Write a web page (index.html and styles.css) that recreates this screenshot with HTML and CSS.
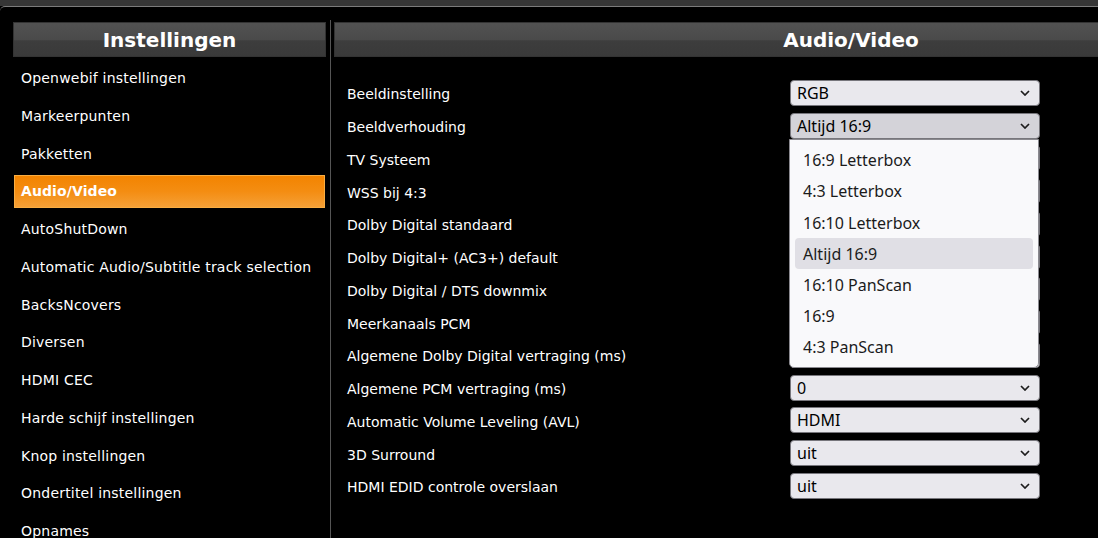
FILE: index.html
```html
<!DOCTYPE html>
<html lang="nl">
<head>
<meta charset="utf-8">
<title>Instellingen - Audio/Video</title>
<link rel="stylesheet" href="styles.css">
</head>
<body>
<div class="topbar"></div>
<div class="frame">
  <aside class="sidebar">
    <div class="head">Instellingen</div>
    <ul class="menu">
      <li class="item">Openwebif instellingen</li>
      <li class="item">Markeerpunten</li>
      <li class="item">Pakketten</li>
      <li class="item active">Audio/Video</li>
      <li class="item">AutoShutDown</li>
      <li class="item">Automatic Audio/Subtitle track selection</li>
      <li class="item">BacksNcovers</li>
      <li class="item">Diversen</li>
      <li class="item">HDMI CEC</li>
      <li class="item">Harde schijf instellingen</li>
      <li class="item">Knop instellingen</li>
      <li class="item">Ondertitel instellingen</li>
      <li class="item">Opnames</li>
    </ul>
  </aside>
  <div class="divider"></div>
  <main class="content">
    <div class="head">Audio/Video</div>
    <div class="form">
      <div class="label">Beeldinstelling</div>
      <div class="cell"><div class="select"><span>RGB</span><svg class="chev" viewBox="0 0 10 6"><path d="M1 1l4 4 4-4"/></svg></div></div>

      <div class="label">Beeldverhouding</div>
      <div class="cell">
        <div class="select open"><span>Altijd 16:9</span><svg class="chev" viewBox="0 0 10 6"><path d="M1 1l4 4 4-4"/></svg>
          <ul class="dropdown">
            <li class="opt">16:9 Letterbox</li>
            <li class="opt">4:3 Letterbox</li>
            <li class="opt">16:10 Letterbox</li>
            <li class="opt sel">Altijd 16:9</li>
            <li class="opt">16:10 PanScan</li>
            <li class="opt">16:9</li>
            <li class="opt">4:3 PanScan</li>
          </ul>
        </div>
      </div>

      <div class="label">TV Systeem</div>
      <div class="cell"><div class="select"></div></div>

      <div class="label">WSS bij 4:3</div>
      <div class="cell"><div class="select"></div></div>

      <div class="label">Dolby Digital standaard</div>
      <div class="cell"><div class="select"></div></div>

      <div class="label">Dolby Digital+ (AC3+) default</div>
      <div class="cell"><div class="select"></div></div>

      <div class="label">Dolby Digital / DTS downmix</div>
      <div class="cell"><div class="select"></div></div>

      <div class="label">Meerkanaals PCM</div>
      <div class="cell"><div class="select"></div></div>

      <div class="label">Algemene Dolby Digital vertraging (ms)</div>
      <div class="cell"><div class="select"></div></div>

      <div class="label">Algemene PCM vertraging (ms)</div>
      <div class="cell"><div class="select"><span>0</span><svg class="chev" viewBox="0 0 10 6"><path d="M1 1l4 4 4-4"/></svg></div></div>

      <div class="label">Automatic Volume Leveling (AVL)</div>
      <div class="cell"><div class="select"><span>HDMI</span><svg class="chev" viewBox="0 0 10 6"><path d="M1 1l4 4 4-4"/></svg></div></div>

      <div class="label">3D Surround</div>
      <div class="cell"><div class="select"><span>uit</span><svg class="chev" viewBox="0 0 10 6"><path d="M1 1l4 4 4-4"/></svg></div></div>

      <div class="label">HDMI EDID controle overslaan</div>
      <div class="cell"><div class="select"><span>uit</span><svg class="chev" viewBox="0 0 10 6"><path d="M1 1l4 4 4-4"/></svg></div></div>
    </div>
  </main>
</div>
</body>
</html>
```
FILE: styles.css
```css
html, body {
  margin: 0;
  padding: 0;
  background: #000;
  overflow: hidden;
  height: 100%;
}
body {
  font-family: "DejaVu Sans", Verdana, sans-serif;
  color: #fff;
  font-size: 14px;
}
.topbar {
  height: 6px;
  background: #363636;
}
.frame {
  display: flex;
  align-items: stretch;
  border-top: 1px solid #7c7c7c;
  border-top-left-radius: 5px;
  padding-top: 13px;
  width: 1400px;
  height: 600px;
}
.sidebar {
  flex: 0 0 313px;
  margin-left: 13px;
  padding-top: 2px;
}
.head {
  height: 35px;
  display: flex;
  align-items: center;
  justify-content: center;
  font-weight: bold;
  font-size: 20px;
  color: #fff;
  background: linear-gradient(to bottom, #525252 0%, #4a4a4a 50%, #3d3d3d 54%, #393939 100%);
  box-shadow: inset 0 0 0 1px #333;
}
.menu {
  list-style: none;
  margin: 0;
  padding: 4.5px 0 0;
  display: flex;
  flex-direction: column;
  gap: 4.75px;
}
.item {
  box-sizing: border-box;
  height: 33px;
  margin: 0 1px;
  border: 1px solid transparent;
  padding-left: 6px;
  display: flex;
  align-items: center;
  white-space: nowrap;
  letter-spacing: 0.2px;
}
.item.active {
  font-weight: bold;
  letter-spacing: 0.1px;
  background: linear-gradient(to bottom, #f38400 0%, #f48d12 50%, #f5a037 100%);
  border-color: #f9ad42;
}
.divider {
  flex: 0 0 1px;
  background: #555;
  margin-left: 4px;
}
.content {
  flex: 0 0 1034px;
  margin-left: 3px;
  padding-top: 2px;
}
.form {
  display: grid;
  grid-template-columns: 443px 250px;
  grid-auto-rows: 32.75px;
  padding: 19.5px 0 0 13px;
}
.label {
  display: flex;
  align-items: center;
  white-space: nowrap;
  padding-top: 3px;
}
.cell {
  display: flex;
  align-items: center;
}
.select {
  position: relative;
  box-sizing: border-box;
  width: 250px;
  height: 26px;
  border: 1px solid #77767c;
  border-radius: 4px;
  background: #e9e8ed;
  color: #000;
  font-family: "Noto Sans", sans-serif;
  font-size: 16px;
  display: flex;
  align-items: center;
  padding-left: 6px;
}
.select.open {
  background: #d4d3d9;
}
.chev {
  position: absolute;
  right: 9px;
  top: 50%;
  width: 10px;
  height: 6px;
  margin-top: -3px;
}
.chev path {
  fill: none;
  stroke: #1c1c1c;
  stroke-width: 1.7;
}
.dropdown {
  position: absolute;
  z-index: 5;
  top: 25px;
  left: -2px;
  box-sizing: border-box;
  width: 250px;
  margin: 0;
  padding: 5px 5px 4px;
  list-style: none;
  background: #f9f9fb;
  border: 1px solid #8a898f;
  border-radius: 0 0 5px 5px;
  color: #1b1b1b;
}
.opt {
  height: 31.2px;
  display: flex;
  align-items: center;
  padding-left: 8px;
  border-radius: 4px;
  white-space: nowrap;
}
.opt.sel {
  background: #e0dfe5;
}
```
